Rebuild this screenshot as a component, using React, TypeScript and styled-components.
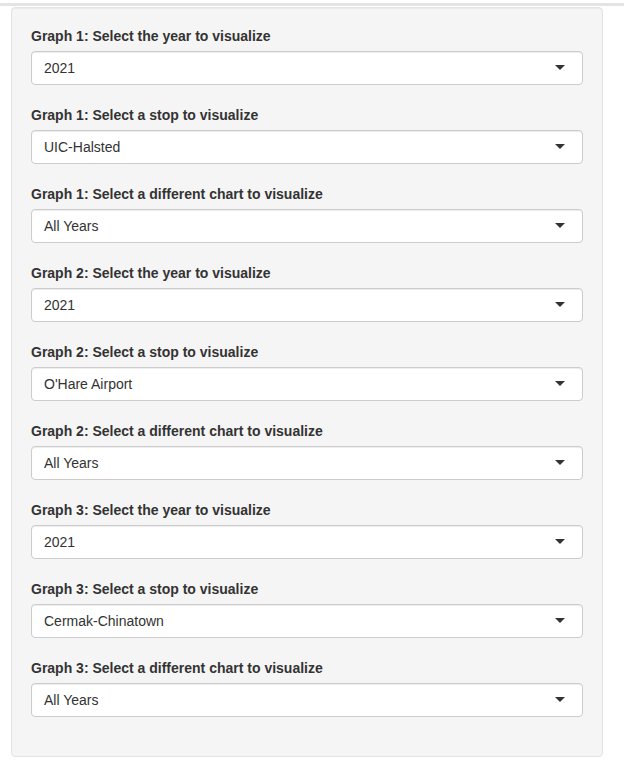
import React from "react";
import styled, { createGlobalStyle } from "styled-components";

const Global = createGlobalStyle`
  html, body { margin: 0; padding: 0; background: #fff; }
  body { font-family: "Liberation Sans", Arial, Helvetica, sans-serif; font-size: 14px; line-height: 20px; color: #333; }
`;

const TopRule = styled.div`
  height: 3px;
  margin-top: 3px;
  background: #e4e4e4;
`;

const Well = styled.div`
  margin: 1px 21px 21px 11px;
  padding: 18px 19px 19px;
  background: #f5f5f5;
  border: 1px solid #e3e3e3;
  border-radius: 4px;
  box-shadow: inset 0 1px 1px rgba(0, 0, 0, 0.05);
`;

const FormGroup = styled.div`
  margin-bottom: 20px;
`;

const Label = styled.label`
  display: block;
  font-weight: bold;
  font-size: 14px;
  line-height: 20px;
  margin-bottom: 5px;
  color: #333;
`;

const SelectBox = styled.div`
  box-sizing: border-box;
  height: 34px;
  display: flex;
  align-items: center;
  justify-content: space-between;
  padding: 0 17px 0 12px;
  background: #fff;
  border: 1px solid #ccc;
  border-radius: 4px;
  box-shadow: inset 0 1px 1px rgba(0, 0, 0, 0.075);
  font-size: 14px;
  color: #333;
`;

const Caret = styled.span`
  width: 0;
  height: 0;
  border-style: solid;
  border-width: 5px 5px 0 5px;
  border-color: #333 transparent transparent transparent;
  margin-top: -1px;
`;

const fields: { label: string; value: string }[] = [
  { label: "Graph 1: Select the year to visualize", value: "2021" },
  { label: "Graph 1: Select a stop to visualize", value: "UIC-Halsted" },
  { label: "Graph 1: Select a different chart to visualize", value: "All Years" },
  { label: "Graph 2: Select the year to visualize", value: "2021" },
  { label: "Graph 2: Select a stop to visualize", value: "O'Hare Airport" },
  { label: "Graph 2: Select a different chart to visualize", value: "All Years" },
  { label: "Graph 3: Select the year to visualize", value: "2021" },
  { label: "Graph 3: Select a stop to visualize", value: "Cermak-Chinatown" },
  { label: "Graph 3: Select a different chart to visualize", value: "All Years" },
];

export default function App() {
  return (
    <>
      <Global />
      <TopRule />
      <Well>
        {fields.map((f, i) => (
          <FormGroup key={i}>
            <Label>{f.label}</Label>
            <SelectBox>
              <span>{f.value}</span>
              <Caret />
            </SelectBox>
          </FormGroup>
        ))}
      </Well>
    </>
  );
}
